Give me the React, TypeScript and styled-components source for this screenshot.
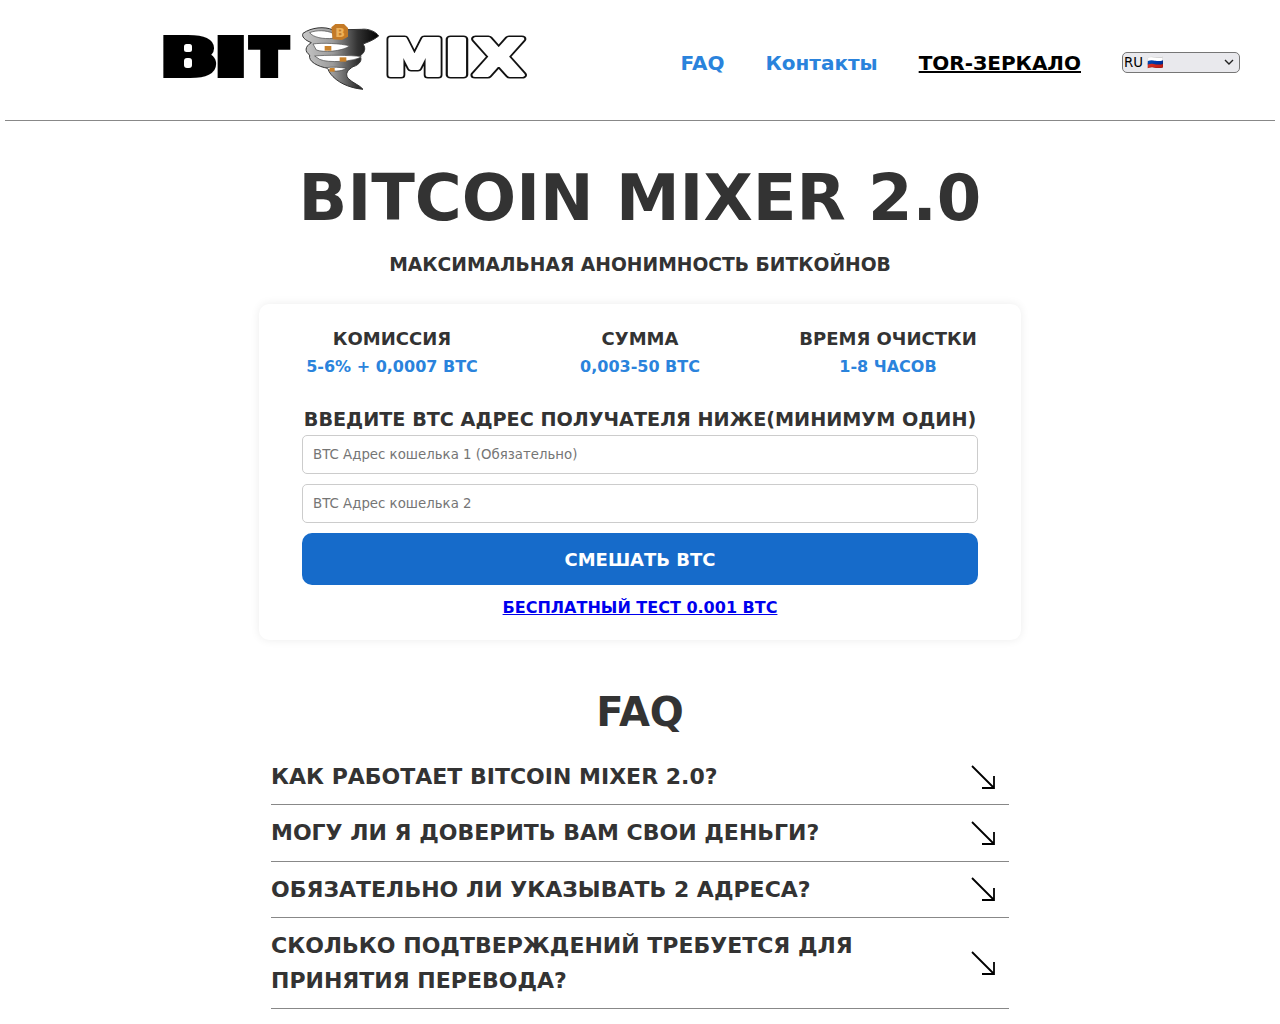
import React from "react";
import styled, { createGlobalStyle } from "styled-components";

const GlobalStyle = createGlobalStyle`
  html, body {
    margin: 0;
    padding: 0;
    background: #fff;
    color: #333;
    font-family: "DejaVu Sans", sans-serif;
    overflow: hidden;
  }
`;

const Page = styled.div`
  height: 1024px;
  overflow: hidden;
`;

const Header = styled.header`
  margin: 0 5px;
  height: 120px;
  border-bottom: 1px solid #888;
  display: flex;
  align-items: center;
  justify-content: space-between;
  padding: 0 35px 0 145px;
`;

const LogoLink = styled.a`
  display: block;
  width: 390px;
  height: 90px;
  margin-top: -10px;
`;

const Nav = styled.nav`
  display: flex;
  align-items: center;
  gap: 41px;
  margin-top: 5px;
`;

const NavLink = styled.a<{ $mirror?: boolean }>`
  font-size: 20px;
  font-weight: 700;
  color: ${(p) => (p.$mirror ? "#000" : "#2a83dc")};
  text-decoration: ${(p) => (p.$mirror ? "underline" : "none")};
`;

const chevron =
  "url(\"data:image/svg+xml,%3Csvg xmlns='http://www.w3.org/2000/svg' width='10' height='6'%3E%3Cpath d='M1 1l4 4 4-4' fill='none' stroke='%23222' stroke-width='1.4'/%3E%3C/svg%3E\")";

const LangSelect = styled.select`
  appearance: none;
  box-sizing: border-box;
  width: 118px;
  height: 21px;
  padding: 0 0 0 1px;
  border: 1px solid #767676;
  border-radius: 5px;
  background: #e9e9ed ${chevron} no-repeat 101px 6px;
  font-family: "DejaVu Sans", sans-serif;
  font-size: 13.33px;
  color: #000;
`;

const Hero = styled.section`
  text-align: center;
  padding-top: 39px;
`;

const Title = styled.h1`
  margin: 0;
  font-size: 64px;
  line-height: 77px;
  font-weight: 700;
  color: #333;
`;

const Subtitle = styled.h2`
  margin: 16px 0 0;
  font-size: 18.72px;
  line-height: 24px;
  font-weight: 700;
  color: #333;
`;

const Card = styled.section`
  box-sizing: border-box;
  width: 762px;
  height: 336px;
  margin: 27px auto 0;
  padding: 23px 43px 0;
  background: #fff;
  border-radius: 10px;
  box-shadow: 0 0 10px rgba(0, 0, 0, 0.08);
`;

const Stats = styled.div`
  display: flex;
  justify-content: space-between;
  margin-bottom: 29px;
`;

const Stat = styled.div`
  width: 180px;
  text-align: center;
  white-space: nowrap;
`;

const StatLabel = styled.div`
  font-size: 18px;
  line-height: 24px;
  font-weight: 700;
  color: #333;
`;

const StatValue = styled.div`
  margin-top: 4px;
  font-size: 16px;
  line-height: 24px;
  font-weight: 700;
  color: #2a83dc;
`;

const FormTitle = styled.div`
  margin-bottom: 3px;
  font-size: 19.2px;
  line-height: 24px;
  font-weight: 700;
  text-align: center;
  white-space: nowrap;
  color: #333;
`;

const AddressInput = styled.input`
  box-sizing: border-box;
  display: block;
  width: 100%;
  height: 39px;
  margin-bottom: 10px;
  padding: 0 10px;
  border: 1px solid #ccc;
  border-radius: 5px;
  font-family: "DejaVu Sans", sans-serif;
  font-size: 13.33px;
  &::placeholder {
    color: #757575;
  }
`;

const MixButton = styled.button`
  display: block;
  width: 100%;
  height: 52px;
  border: 0;
  border-radius: 10px;
  background: #166bca;
  color: #fff;
  font-family: "DejaVu Sans", sans-serif;
  font-size: 18px;
  font-weight: 700;
`;

const TestLink = styled.a`
  display: block;
  margin-top: 12px;
  text-align: center;
  font-size: 16px;
  line-height: 22px;
  font-weight: 700;
  color: #0000ee;
  text-decoration: underline;
`;

const Faq = styled.section`
  width: 738px;
  margin: 46px auto 0;
`;

const FaqTitle = styled.h2`
  margin: 0 0 11.2px;
  font-size: 40px;
  line-height: 52px;
  font-weight: 700;
  text-align: center;
  color: #333;
`;

const FaqRow = styled.div`
  display: flex;
  align-items: center;
  justify-content: space-between;
  padding: 10px 13px 10px 0;
  border-bottom: 1px solid #888;
`;

const Question = styled.div`
  width: 650px;
  font-size: 22px;
  line-height: 35.2px;
  font-weight: 700;
  color: #333;
`;

// coordinates taken from a 3x crop, hence the scale
const Tornado = () => (
  <g transform="translate(298 20) scale(0.3333)">
    <defs>
      <linearGradient id="funnel" x1="0" x2="1" y1="0" y2="0">
        <stop offset="0" stopColor="#c8c8c8" />
        <stop offset="0.4" stopColor="#9a9a9a" />
        <stop offset="0.72" stopColor="#333" />
        <stop offset="1" stopColor="#000" />
      </linearGradient>
    </defs>
    <path
      d="M15 40 C40 22 80 18 105 30 L190 28 C210 25 235 35 242 48 C225 62 205 68 195 72 C205 85 200 100 185 108 C195 118 185 135 165 140 C150 150 140 160 150 175 C165 190 185 195 195 208 C165 205 130 195 105 170 C95 160 90 150 90 145 C60 140 30 125 35 105 C20 95 20 80 40 68 C20 60 10 50 15 40 Z"
      fill="url(#funnel)"
      stroke="#333"
      strokeWidth="3"
    />
    <path d="M35 38 C55 30 85 30 105 40 L105 55 C75 58 45 52 35 38Z" fill="#fff" stroke="#444" strokeWidth="2" />
    <path d="M45 72 C70 68 130 70 155 78 C130 95 75 98 55 90 Z" fill="#fff" stroke="#444" strokeWidth="2" />
    <path d="M50 108 C80 105 160 105 190 110 C170 125 90 130 65 118Z" fill="#fff" stroke="#444" strokeWidth="2" />
    <path d="M85 143 C100 140 130 142 145 145 C130 155 100 158 85 143Z" fill="#fff" stroke="#444" strokeWidth="2" />
    <path d="M104 58 L100 22 L112 12 L138 12 L150 24 L150 50 L132 60 Z" fill="#c47a26" />
    <text x="126" y="52" textAnchor="middle" fontFamily="DejaVu Sans" fontWeight="700" fontSize="38" fill="#eeb25c">B</text>
    <rect x="80" y="78" width="20" height="14" fill="#c9822c" />
    <rect x="125" y="112" width="20" height="13" fill="#c9822c" />
    <rect x="95" y="144" width="15" height="11" fill="#c9822c" />
  </g>
);

const bitLetters = [
  { ch: "B", x: 162.8, w: 52.5 },
  { ch: "I", x: 217, w: 27.5 },
  { ch: "T", x: 252, w: 34.4 },
];

const mixLetters = [
  { ch: "M", x: 385.2, w: 58.5 },
  { ch: "I", x: 444.3, w: 25.5 },
  { ch: "X", x: 473.7, w: 50 },
];

const Logo = () => (
  <svg width="390" height="90" viewBox="150 10 390 90" aria-label="BitMix">
    {bitLetters.map((l) => (
      <text
        key={l.ch}
        x={l.x}
        y="74"
        fontFamily="DejaVu Sans"
        fontWeight="700"
        fontSize="48"
        fill="#000"
        stroke="#000"
        strokeWidth="8"
        textLength={l.w}
        lengthAdjust="spacingAndGlyphs"
      >
        {l.ch}
      </text>
    ))}
    {/* the counters of the heavy B close up under the stroke */}
    <rect x="184" y="44" width="8" height="8" rx="2.5" fill="#fff" />
    <rect x="184" y="58" width="8" height="10" rx="3" fill="#fff" />
    <Tornado />
    {mixLetters.map((l) => (
      <text
        key={l.ch}
        x={l.x}
        y="74.5"
        fontFamily="DejaVu Sans"
        fontWeight="700"
        fontSize="49.4"
        fill="#fff"
        stroke="#111"
        strokeWidth="7"
        strokeLinejoin="round"
        textLength={l.w}
        lengthAdjust="spacingAndGlyphs"
      >
        {l.ch}
      </text>
    ))}
    {mixLetters.map((l) => (
      <text
        key={l.ch + "-inner"}
        x={l.x}
        y="74.5"
        fontFamily="DejaVu Sans"
        fontWeight="700"
        fontSize="49.4"
        fill="#fff"
        stroke="#fff"
        strokeWidth="3.8"
        strokeLinejoin="round"
        textLength={l.w}
        lengthAdjust="spacingAndGlyphs"
        aria-hidden="true"
      >
        {l.ch}
      </text>
    ))}
  </svg>
);

const ArrowIcon = () => (
  <svg width="26" height="26" viewBox="0 0 26 26" fill="none" stroke="#000" strokeWidth="1.8">
    <path d="M2 2 L24 24 M24 12 V24 H12" />
  </svg>
);

const questions = [
  "КАК РАБОТАЕТ BITCOIN MIXER 2.0?",
  "МОГУ ЛИ Я ДОВЕРИТЬ ВАМ СВОИ ДЕНЬГИ?",
  "ОБЯЗАТЕЛЬНО ЛИ УКАЗЫВАТЬ 2 АДРЕСА?",
  "СКОЛЬКО ПОДТВЕРЖДЕНИЙ ТРЕБУЕТСЯ ДЛЯ ПРИНЯТИЯ ПЕРЕВОДА?",
];

export default function App() {
  return (
    <Page>
      <GlobalStyle />
      <Header>
        <LogoLink href="#"><Logo /></LogoLink>
        <Nav>
          <NavLink href="#">FAQ</NavLink>
          <NavLink href="#">Контакты</NavLink>
          <NavLink href="#" $mirror>TOR-ЗЕРКАЛО</NavLink>
          <LangSelect defaultValue="ru">
            <option value="ru">RU 🇷🇺</option>
            <option value="en">EN 🇬🇧</option>
          </LangSelect>
        </Nav>
      </Header>
      <Hero>
        <Title>BITCOIN MIXER 2.0</Title>
        <Subtitle>МАКСИМАЛЬНАЯ АНОНИМНОСТЬ БИТКОЙНОВ</Subtitle>
      </Hero>
      <Card>
        <Stats>
          <Stat><StatLabel>КОМИССИЯ</StatLabel><StatValue>5-6% + 0,0007 BTC</StatValue></Stat>
          <Stat><StatLabel>СУММА</StatLabel><StatValue>0,003-50 BTC</StatValue></Stat>
          <Stat><StatLabel>ВРЕМЯ ОЧИСТКИ</StatLabel><StatValue>1-8 ЧАСОВ</StatValue></Stat>
        </Stats>
        <FormTitle>ВВЕДИТЕ BTC АДРЕС ПОЛУЧАТЕЛЯ НИЖЕ(МИНИМУМ ОДИН)</FormTitle>
        <AddressInput placeholder="BTC Адрес кошелька 1 (Обязательно)" />
        <AddressInput placeholder="BTC Адрес кошелька 2" />
        <MixButton>СМЕШАТЬ BTC</MixButton>
        <TestLink href="#">БЕСПЛАТНЫЙ ТЕСТ 0.001 BTC</TestLink>
      </Card>
      <Faq>
        <FaqTitle>FAQ</FaqTitle>
        {questions.map((q) => (
          <FaqRow key={q}>
            <Question>{q}</Question>
            <ArrowIcon />
          </FaqRow>
        ))}
      </Faq>
    </Page>
  );
}
